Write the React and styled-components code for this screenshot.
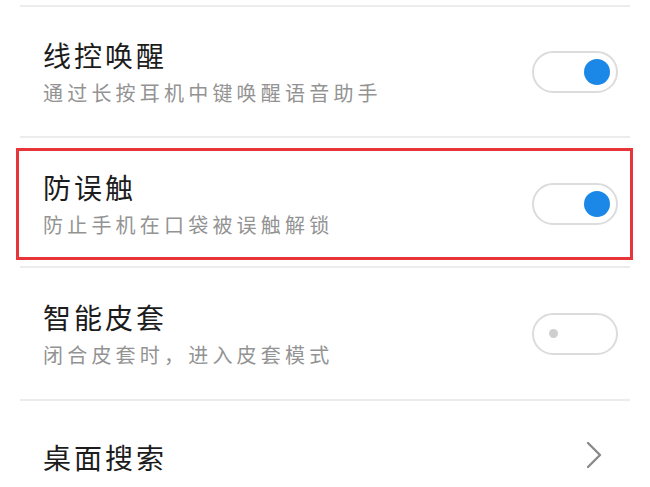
import styled, { createGlobalStyle } from "styled-components";

const GlobalStyle = createGlobalStyle`
  html, body {
    margin: 0;
    padding: 0;
    background: #ffffff;
  }

  body {
    font-family: "Noto Sans CJK SC", "Noto Sans", sans-serif;
    overflow: hidden;
  }
`;

const Page = styled.div`
  width: 650px;
  height: 487px;
  overflow: hidden;

  display: flex;
  flex-direction: column;

  padding: 5px 20px 0;
  box-sizing: border-box;
`;

const Divider = styled.div`
  height: 2px;
  background-color: #ececec;
  flex-shrink: 0;
`;

const Row = styled.div`
  height: ${({ $height }) => $height}px;

  display: flex;
  align-items: center;
  justify-content: space-between;

  padding: 0 12px 0 23px;
  box-sizing: border-box;
  flex-shrink: 0;
`;

const Highlight = styled.div`
  margin: 10px -3px 6px -4px;
  border: 3px solid #e8353a;

  ${Row} {
    padding-left: 24px;
  }
`;

const Texts = styled.div`
  display: flex;
  flex-direction: column;
`;

const Title = styled.div`
  font-size: 28px;
  line-height: 36px;
  letter-spacing: 3px;
  color: #1c1c1c;
`;

const Sub = styled.div`
  font-size: 20px;
  line-height: 28px;
  letter-spacing: 4.2px;
  color: #939393;

  margin-top: 6px;
`;

const Track = styled.div`
  width: 86px;
  height: 42px;

  display: flex;
  align-items: center;
  justify-content: ${({ $on }) => ($on ? "flex-end" : "flex-start")};

  border: 2px solid #dcdcdc;
  border-radius: 23px;
  box-sizing: border-box;
  padding: ${({ $on }) => ($on ? "0 6px" : "0 15px")};
  background: #fff;
`;

const Knob = styled.div`
  width: ${({ $on }) => ($on ? 26 : 9)}px;
  height: ${({ $on }) => ($on ? 26 : 9)}px;
  border-radius: 50%;
  background-color: ${({ $on }) => ($on ? "#1b87e6" : "#cfcfcf")};
`;

const ChevronBox = styled.div`
  display: flex;
  margin-right: 14px;
  margin-top: -4px;
`;

const Switch = ({ on }) => (
  <Track $on={on}>
    <Knob $on={on} />
  </Track>
);

const Chevron = () => (
  <ChevronBox>
    <svg width="20" height="30" viewBox="0 0 20 30" fill="none">
      <polyline
        points="4,3 16,15 4,27"
        stroke="#8a8a8a"
        strokeWidth="2.4"
        strokeLinecap="round"
        strokeLinejoin="round"
      />
    </svg>
  </ChevronBox>
);

const SettingRow = ({ title, sub, on, height }) => (
  <Row $height={height}>
    <Texts>
      <Title>{title}</Title>
      <Sub>{sub}</Sub>
    </Texts>
    <Switch on={on} />
  </Row>
);

export default function App() {
  return (
    <>
      <GlobalStyle />
      <Page>
        <Divider />
        <SettingRow title="线控唤醒" sub="通过长按耳机中键唤醒语音助手" on height={129} />
        <Divider />
        <Highlight>
          <SettingRow title="防误触" sub="防止手机在口袋被误触解锁" on height={106} />
        </Highlight>
        <Divider />
        <SettingRow title="智能皮套" sub="闭合皮套时，进入皮套模式" on={false} height={131} />
        <Divider />
        <Row $height={112}>
          <Title>桌面搜索</Title>
          <Chevron />
        </Row>
      </Page>
    </>
  );
}
